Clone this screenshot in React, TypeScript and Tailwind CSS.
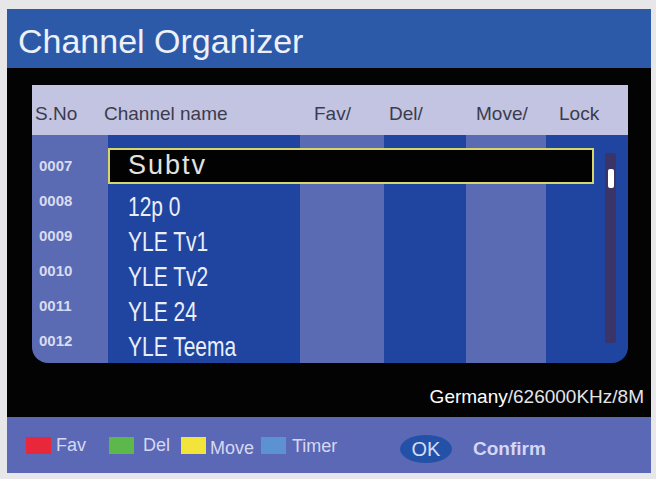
const channels = [
  { no: '0007', name: 'Subtv' },
  { no: '0008', name: '12p 0' },
  { no: '0009', name: 'YLE Tv1' },
  { no: '0010', name: 'YLE Tv2' },
  { no: '0011', name: 'YLE 24' },
  { no: '0012', name: 'YLE Teema' },
];

const legend = [
  { color: 'bg-[#e8283a]', label: 'Fav', box: 'ml-[19px]', text: 'w-[30px] ml-[5px]' },
  { color: 'bg-[#5cb84a]', label: 'Del', box: 'ml-[23px]', text: 'w-[28px] ml-[9px]' },
  { color: 'bg-[#f2e43a]', label: 'Move', box: 'ml-[10px]', text: 'w-[42px] ml-[4px] pt-[5px]' },
  { color: 'bg-[#5c92d2]', label: 'Timer', box: 'ml-[9px]', text: 'w-[43px] ml-[6px] pt-[2px]' },
];

export default function App() {
  return (
    <div
      className="w-[656px] h-[479px] bg-[#e7e7e9] pt-[9px] pl-[7px]"
      style={{ fontFamily: '"Liberation Sans", Arial, sans-serif' }}
    >
      <div className="w-[644px] flex flex-col">
        {/* title bar */}
        <div className="h-[59px] bg-[#2c5aa9] flex items-center pl-[11px] pt-[5px]">
          <h1 className="text-[34px] leading-none text-[#eef0f8] font-normal">Channel Organizer</h1>
        </div>

        {/* main black area */}
        <div className="h-[349px] bg-[#030303] pt-[17px] pl-[25px] flex flex-col">
          <div className="w-[596px] flex flex-col">
            <div className="h-[50px] bg-[#c3c4e1] grid grid-cols-[69px_210px_75px_87px_83px_1fr] pl-[3px] pt-[8px] items-center text-[19px] text-[#3b3b4e]">
              <span>S.No</span>
              <span>Channel name</span>
              <span>Fav/</span>
              <span>Del/</span>
              <span>Move/</span>
              <span>Lock</span>
            </div>

            <div className="relative h-[228px] rounded-b-[16px] overflow-hidden flex">
              <div className="w-[76px] bg-[#5a6ab3]" />
              <div className="w-[192px] bg-[#1f45a0]" />
              <div className="w-[84px] bg-[#5a6ab3]" />
              <div className="w-[82px] bg-[#1f45a0]" />
              <div className="w-[80px] bg-[#5a6ab3]" />
              <div className="flex-1 bg-[#1f45a0]" />

              <div className="absolute inset-0 pt-[13px] flex flex-col">
                {channels.map((ch, i) => (
                  <div key={ch.no} className="h-[35px] flex items-center">
                    <span className="w-[76px] pl-[7px] text-[15px] font-bold text-[#d9dcf0] leading-none">
                      {ch.no}
                    </span>
                    {i === 0 ? (
                      <div className="w-[486px] h-[36px] bg-[#020202] border-2 border-[#d6d66c] flex items-center pl-[18px]">
                        <span className="text-[27px] leading-none tracking-[2px] text-[#e2e2e2]">{ch.name}</span>
                      </div>
                    ) : (
                      <span className="ml-[20px] text-[28px] leading-none text-[#eaeef9] translate-y-[6px] scale-x-75 origin-left whitespace-nowrap">
                        {ch.name}
                      </span>
                    )}
                  </div>
                ))}
              </div>

              {/* scrollbar */}
              <div className="absolute left-[573px] top-[18px] w-[11px] h-[190px] bg-[#3a3566] rounded-[3px]">
                <div className="absolute left-[3px] top-[16px] w-[6px] h-[19px] bg-white rounded-[2px]" />
              </div>
            </div>
          </div>

          <div className="mt-[24px] pr-[7px] text-right text-[19px] leading-none">
            <span className="text-white">Germany</span>
            <span className="text-[#e4e4e8]">/626000KHz/8M</span>
          </div>
        </div>

        {/* footer legend */}
        <div className="h-[56px] bg-[#5a68b6] flex items-center text-[18px] text-[#d6d8f2]">
          {legend.map((l) => (
            <div key={l.label} className="flex items-center">
              <span className={`w-[25px] h-[17px] ${l.color} ${l.box}`} />
              <span className={`${l.text} leading-none`}>{l.label}</span>
            </div>
          ))}
          <div className="ml-[65px] w-[52px] h-[28px] rounded-[50%] bg-[#2451a8] flex items-center justify-center mt-[8px]">
            <span className="text-[20px] leading-none text-[#d4dcf4]">OK</span>
          </div>
          <span className="ml-[21px] text-[19px] font-bold leading-none text-[#d4d6f4] mt-[6px]">Confirm</span>
        </div>
      </div>
    </div>
  );
}
